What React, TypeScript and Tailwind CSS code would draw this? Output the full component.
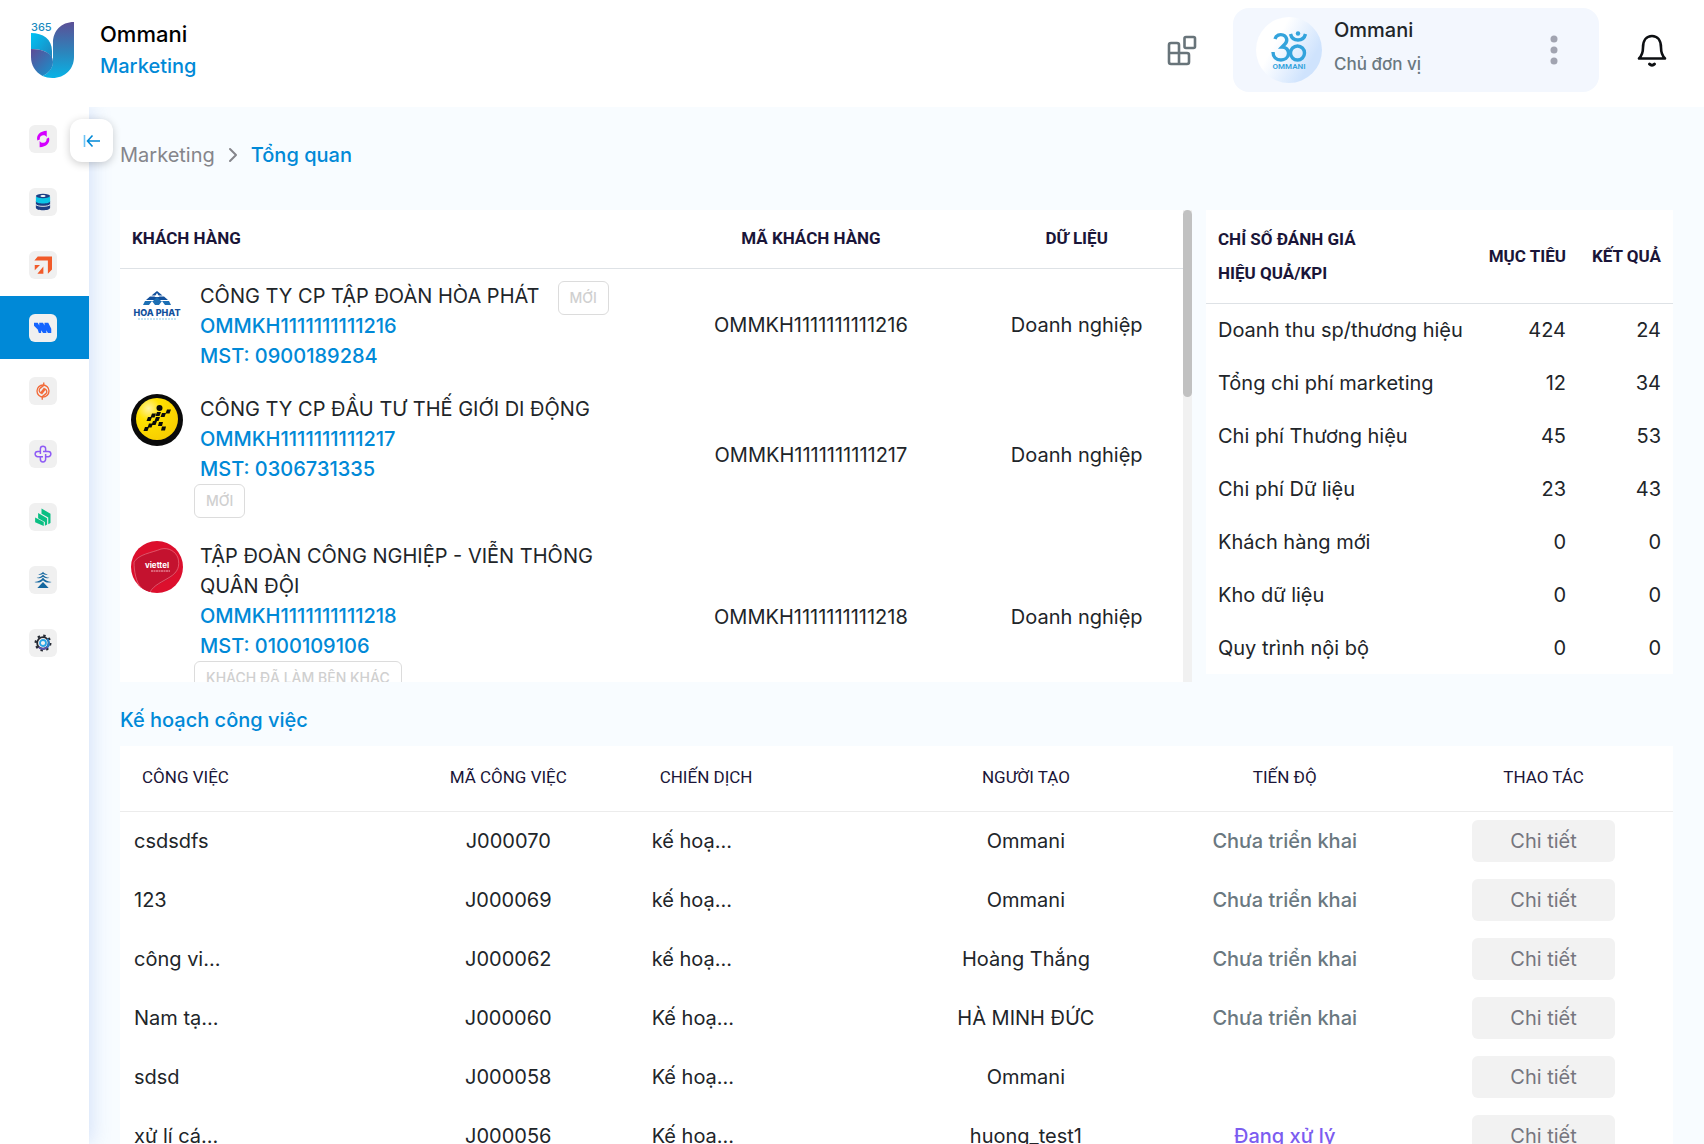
import React from 'react'
import { ChevronRight } from 'lucide-react'

interface Customer {
  code: string
  name: string
  tax: string
  type: string
  status: string
  logo: React.ReactNode
}

interface Task {
  name: string
  code: string
  campaign: string
  creator: string
  progress: string
}

function BrandLogo() {
  return (
    <svg viewBox="0 0 43 56" className="h-14 w-[43px] overflow-visible" aria-hidden="true">
      <defs>
        <linearGradient id="brandRight" x1="0" y1="0" x2="0" y2="1">
          <stop offset="0" stopColor="#5c4f96" />
          <stop offset="0.55" stopColor="#2b86bd" />
          <stop offset="1" stopColor="#08b3e6" />
        </linearGradient>
        <linearGradient id="brandLeaf" x1="0" y1="0" x2="1" y2="1">
          <stop offset="0" stopColor="#00c3f5" />
          <stop offset="1" stopColor="#2180b8" />
        </linearGradient>
        <linearGradient id="brandLow" x1="0" y1="0" x2="0.8" y2="1">
          <stop offset="0" stopColor="#5f4b95" />
          <stop offset="1" stopColor="#1a8fca" />
        </linearGradient>
      </defs>
      <path d="M43 0v35c0 12-9 21-21.500 21-4 0-7-.8-10-2C18 51 22 46 22 39V21C22 9 30 0 43 0z" fill="url(#brandRight)" />
      <path d="M0 11c12 0 21 6 21 18v10C21 31 12 27 0 27z" fill="url(#brandLeaf)" />
      <path d="M0 27c12 0 22 4 22 13 0 6-4 11-10.500 14C4 50 0 43 0 35z" fill="url(#brandLow)" />
      <text x="0" y="9" fontSize="11" fontFamily="Inter, sans-serif" fontWeight="500" fill="#1a8ac0">365</text>
    </svg>
  )
}

function OmLogo() {
  return (
    <svg viewBox="0 0 66 66" className="size-[66px]" aria-hidden="true">
      <defs>
        <linearGradient id="omBg" x1="0.1" y1="0.2" x2="1" y2="0.7">
          <stop offset="0.25" stopColor="#ffffff" />
          <stop offset="0.85" stopColor="#cfe3fd" />
        </linearGradient>
      </defs>
      <circle cx="33" cy="33" r="33" fill="url(#omBg)" />
      <g fill="none" stroke="#33a3dc" strokeWidth="3.4">
        <path d="M19 22c1-4 5-5 8-4 4 1.500 5 6 2 9l-3 3c4 0 7 3 6.500 7-.5 4-4 6-7.500 6-5 0-8-3-8-8" />
        <circle cx="41.500" cy="36" r="7" />
        <path d="M34.500 17c1 4 4 6 7.500 6s6.500-2 7.500-6" />
      </g>
      <circle cx="42" cy="16.500" r="2.200" fill="#33a3dc" />
      <text x="33" y="52" textAnchor="middle" fontSize="8" fontFamily="Roboto, sans-serif" fontWeight="600" fill="#33a3dc">OMMANI</text>
    </svg>
  )
}

function HoaPhatLogo() {
  return (
    <svg viewBox="0 0 52 52" className="size-[52px]" aria-hidden="true">
      <path d="M26 10l5.500 4.500h-11z" fill="#12509c" />
      <path d="M19 15.500h5l2-2 2 2h5l4 3.500H15z" fill="#12509c" />
      <path d="M14 20h8l4-4 4 4h8l2 4H12z" fill="#1c6fb4" />
      <path d="M26 12l2.500 4h-5zM21 20l3 4h-6zM31 20l3 4h-6z" fill="#fff" />
      <text x="26" y="35" textAnchor="middle" fontSize="9" fontFamily="Inter, sans-serif" fontWeight="800" fill="#12509c">HOA PHAT</text>
      <path d="M7 38h39" stroke="#8fcbe8" strokeWidth="1" strokeDasharray="2 1" />
    </svg>
  )
}

function MobileWorldLogo() {
  return (
    <svg viewBox="0 0 52 52" className="size-[52px]" aria-hidden="true">
      <defs>
        <radialGradient id="mwSun" cx="0.3" cy="0.25" r="0.8">
          <stop offset="0" stopColor="#fff2a0" />
          <stop offset="0.35" stopColor="#ffe100" />
          <stop offset="1" stopColor="#f7cd00" />
        </radialGradient>
      </defs>
      <circle cx="26" cy="26" r="26" fill="#0a0a0a" />
      <circle cx="26" cy="25" r="21" fill="url(#mwSun)" />
      <g fill="#0a0a0a">
        <circle cx="28.500" cy="14" r="3" />
        <path d="M36 15.500h4l-1.500 4h-4zM31 19h4l-1.500 4h-4zM26 18h4l-1.500 4h-4zM21 19.500h4l-1.500 4h-4zM17 23h4l-1.500 4h-4zM25 23h4l-1.500 4h-4zM22 27h4l-1.500 4h-4zM28 28h4l-1 4h-4zM18 29.500h4l-1.500 4h-4zM31 32.500h4l-1 4h-4zM14 33h4l-1.500 4h-4z" />
      </g>
    </svg>
  )
}

function ViettelLogo() {
  return (
    <svg viewBox="0 0 52 52" className="size-[52px]" aria-hidden="true">
      <circle cx="26" cy="26" r="26" fill="#dc0f2d" />
      <path d="M3 20C8 12 20 12 30 8c8-2 14 3 17 9 2 8 0 14-8 20-8 5-16 8-20 14C8 48 2 36 3 20z" fill="#c4122f" />
      <path d="M3 21C8 13 20 12 30 8c8-2 15 3 17 9 2 8 0 14-8 19-8 5-16 8-20 15M3 21c0 9 2 20 7 26" fill="none" stroke="#ef8191" strokeWidth="0.600" />
      <text x="26" y="27" textAnchor="middle" fontSize="8" fontFamily="Inter, sans-serif" fontWeight="700" fill="#fff">viettel</text>
      <path d="M20 30h19" stroke="#f3b3bd" strokeWidth="1" strokeDasharray="2 0.500" />
    </svg>
  )
}

const menu = [
  {
    label: 'Tổng hợp',
    icon: (
      <g fill="#d400ff">
        <path d="M17 1v8.500c-1-1.800-3-2.700-5-2.500-3 .3-4.500 2.500-4.300 5.500L4.500 14C2.500 7 8 1.500 17 1z" />
        <path d="M7.500 23v-8.500c1 1.800 3 2.700 5 2.500 3-.3 4.500-2.500 4.300-5.500L20 10c2 7-3.500 12.500-12.500 13z" />
      </g>
    ),
  },
  {
    label: 'Dữ liệu',
    icon: (
      <g>
        <path d="M2.500 15.500v4c0 4.500 19 4.500 19 0v-4c-3 3-16 3-19 0z" fill="#1d3f85" />
        <path d="M2.500 10.500v4c0 4.500 19 4.500 19 0v-4z" fill="#1d3f85" />
        <path d="M2.500 5v6c0 4 19 4 19 0V5z" fill="#0cc5e6" />
        <ellipse cx="12" cy="4" rx="9.500" ry="3" fill="#1d3f85" />
        <ellipse cx="12" cy="4" rx="3.500" ry="1.200" fill="#fff" />
        <path d="M2.500 15.500c3 3 16 3 19 0" fill="none" stroke="#efefef" strokeWidth="1.200" />
      </g>
    ),
  },
  {
    label: 'Kinh doanh',
    icon: <path d="M5 0.500H24V18l-5.500 5.500V6H0.500zM1 12h7l-7 7zM12.500 14v9.500H4.500z" fill="#f15a29" />,
  },
  {
    label: 'Marketing',
    active: true,
    icon: <path d="M0 5h5l2 3.500V5h5l2 3.500V5h5l4 8v5.500h-4.500L16.500 15v3.500H12L9.500 15v3.500H6.500L5 14 0 9z" fill="#1565ff" />,
  },
  {
    label: 'Chăm sóc',
    icon: (
      <g fill="none" stroke="#f26b3a" strokeWidth="1.800">
        <circle cx="12" cy="12" r="8" />
        <path d="M13 0.500v4L8 8.500c-2 2-1 5 1 6l5-6.500M11 23.500v-4l5-4c2-2 1-5-1-6l-5 6.500" />
      </g>
    ),
  },
  {
    label: 'Nhân sự',
    icon: (
      <g fill="none" stroke="#8e5bf5" strokeWidth="2">
        <path d="M8.500 12V5a3.500 3.500 0 0 1 7 0v4M15.500 12v7a3.500 3.500 0 0 1-7 0v-4" />
        <path d="M12 8.500h7a3.500 3.500 0 0 1 0 7h-4M12 15.500H5a3.500 3.500 0 0 1 0-7h4" />
      </g>
    ),
  },
  {
    label: 'Kế toán',
    icon: (
      <g fill="#0abf83">
        <path d="M10 0.500l12 7V20l-3 1.500V12.500L10 7.500z" />
        <path d="M5.500 6.500l12 7V22l-3 1.500v-5L5.500 13.500z" />
        <path d="M1.500 12.500l11.500 6V24L1.500 19z" />
      </g>
    ),
  },
  {
    label: 'Tổ chức',
    icon: (
      <g fill="#14679f">
        <path d="M12 14.500l7.500 8h-15z" />
        <path d="M12 1c1 1.800 3.500 3 6.500 3.500-2.500 1-5 .6-6.500-.7-1.500 1.300-4 1.700-6.500.7C8.500 4 11 2.800 12 1z" />
        <path d="M12 4.500c1.500 2.500 4.500 4 8.500 4.500-3.500 1.300-6.500.6-8.500-1.200C10 9.600 7 10.300 3.500 9c4-.5 7-2 8.500-4.500z" />
        <path d="M12 8.500c2 3.300 6 5.300 11.500 6-4.500 1.700-9 .6-11.500-2.300-2.500 2.900-7 4-11.500 2.300 5.500-.7 9.500-2.700 11.500-6z" />
      </g>
    ),
  },
  {
    label: 'Cài đặt',
    icon: (
      <g fill="none">
        <circle cx="12" cy="12" r="9.800" stroke="#262a33" strokeWidth="3" strokeDasharray="3.200 4.497" />
        <circle cx="12" cy="12" r="7.800" stroke="#262a33" strokeWidth="2.400" />
        <path d="M19.800 12a7.800 7.800 0 0 1-13.300 5.500" stroke="#5b51a8" strokeWidth="2.800" />
        <path d="M17.500 6.500a7.800 7.800 0 0 1 0 11" stroke="#2a7fc4" strokeWidth="2.800" />
        <circle cx="12" cy="12" r="4" stroke="#2aa5e6" strokeWidth="2.400" />
      </g>
    ),
  },
]

const customers: Customer[] = [
  { code: 'OMMKH1111111111216', name: 'CÔNG TY CP TẬP ĐOÀN HÒA PHÁT', tax: '0900189284', type: 'Doanh nghiệp', status: 'MỚI', logo: <HoaPhatLogo /> },
  { code: 'OMMKH1111111111217', name: 'CÔNG TY CP ĐẦU TƯ THẾ GIỚI DI ĐỘNG', tax: '0306731335', type: 'Doanh nghiệp', status: 'MỚI', logo: <MobileWorldLogo /> },
  { code: 'OMMKH1111111111218', name: 'TẬP ĐOÀN CÔNG NGHIỆP - VIỄN THÔNG QUÂN ĐỘI', tax: '0100109106', type: 'Doanh nghiệp', status: 'KHÁCH ĐÃ LÀM BÊN KHÁC', logo: <ViettelLogo /> },
]

const kpis = [
  { label: 'Doanh thu sp/thương hiệu', target: 424, result: 24 },
  { label: 'Tổng chi phí marketing', target: 12, result: 34 },
  { label: 'Chi phí Thương hiệu', target: 45, result: 53 },
  { label: 'Chi phí Dữ liệu', target: 23, result: 43 },
  { label: 'Khách hàng mới', target: 0, result: 0 },
  { label: 'Kho dữ liệu', target: 0, result: 0 },
  { label: 'Quy trình nội bộ', target: 0, result: 0 },
]

const tasks: Task[] = [
  { name: 'csdsdfs', code: 'J000070', campaign: 'kế hoạ...', creator: 'Ommani', progress: 'Chưa triển khai' },
  { name: '123', code: 'J000069', campaign: 'kế hoạ...', creator: 'Ommani', progress: 'Chưa triển khai' },
  { name: 'công vi...', code: 'J000062', campaign: 'kế hoạ...', creator: 'Hoàng Thắng', progress: 'Chưa triển khai' },
  { name: 'Nam tạ...', code: 'J000060', campaign: 'Kế hoạ...', creator: 'HÀ MINH ĐỨC', progress: 'Chưa triển khai' },
  { name: 'sdsd', code: 'J000058', campaign: 'Kế hoạ...', creator: 'Ommani', progress: '' },
  { name: 'xử lí cá...', code: 'J000056', campaign: 'Kế hoạ...', creator: 'huong_test1', progress: 'Đang xử lý' },
]

function Header() {
  return (
    <header className="flex h-[107px] shrink-0 items-start justify-between bg-white pl-[31px] pr-9">
      <a href="#" className="flex items-center gap-[26px] pt-[18px]">
        <BrandLogo />
        <span className="flex flex-col font-medium">
          <span className="text-[22px] leading-8 text-black">Ommani</span>
          <span className="text-xl leading-8 text-[#0089d7]">Marketing</span>
        </span>
      </a>
      <div className="flex items-center pt-2">
        <button aria-label="Ứng dụng" className="mr-9">
          <svg viewBox="0 0 30 32" className="h-8 w-[30px]" fill="none" stroke="#68747a" strokeWidth="2.600" strokeLinejoin="round">
            <rect x="17.500" y="3" width="10.500" height="11" rx="1.500" />
            <path d="M12 19V11a2 2 0 0 0-2-2H4a2 2 0 0 0-2 2v17a2 2 0 0 0 2 2h16a2 2 0 0 0 2-2v-7a2 2 0 0 0-2-2H2M12 19v11" />
          </svg>
        </button>
        <div className="flex h-[84px] w-[366px] items-center rounded-2xl bg-[#f3f7fe] pl-[23px] pr-[37px]">
          <OmLogo />
          <div className="ml-3 flex-1 pb-1.5 font-medium">
            <div className="text-xl leading-[34px] text-[#212529]">Ommani</div>
            <div className="text-[17px] leading-[34px] text-[#6a7880]">Chủ đơn vị</div>
          </div>
          <button aria-label="Tùy chọn">
            <svg viewBox="0 0 16 32" className="h-8 w-4" fill="#a1a4b1">
              <circle cx="8" cy="5" r="3.500" />
              <circle cx="8" cy="16" r="3.500" />
              <circle cx="8" cy="27" r="3.500" />
            </svg>
          </button>
        </div>
        <button aria-label="Thông báo" className="ml-[37px]">
          <svg viewBox="0 0 32 34" className="h-[34px] w-8" fill="none" stroke="#0d0f12" strokeWidth="2.600" strokeLinecap="round" strokeLinejoin="round">
            <path d="M3 25.500h26c-3-3-4-6-4-11 0-7-3.500-11.500-9-11.500S7 7.500 7 14.500c0 5-1 8-4 11z" />
            <path d="M13.500 31c1.500 1.700 3.500 1.700 5 0" strokeWidth="3" />
          </svg>
        </button>
      </div>
    </header>
  )
}

function Sidebar() {
  return (
    <aside className="relative z-10 w-[89px] shrink-0 bg-white shadow-[2px_0_20px_rgba(60,110,220,0.200)] [clip-path:inset(0_-40px_0_0)]">
      <nav>
        {menu.map((item) => (
          <a
            key={item.label}
            href="#"
            aria-label={item.label}
            className={item.active ? 'flex h-[63px] items-center bg-[#0089d7] pl-[29px]' : 'flex h-[63px] items-center pl-[29px]'}
          >
            <span className="flex size-7 items-center justify-center rounded-md bg-[#f0f0f0]">
              <svg viewBox="0 0 24 24" className="size-[18px]">{item.icon}</svg>
            </span>
          </a>
        ))}
      </nav>
      <button
        aria-label="Thu gọn"
        className="absolute top-3 left-[70px] flex size-[43px] items-center justify-center rounded-xl bg-white shadow-[0_2px_8px_rgba(0,0,0,0.200)]"
      >
        <svg viewBox="0 0 18 14" className="h-3.5 w-[18px]" fill="none" strokeWidth="1.600">
          <path d="M1.500 1v12" stroke="#6cc3f5" />
          <path d="M17 7H5M9.500 1.500L4.500 7l5 5.500" stroke="#0089d7" />
        </svg>
      </button>
    </aside>
  )
}

function CustomerTable() {
  return (
    <section className="flex h-[472px] min-w-0 flex-1 bg-white">
      <div className="min-w-0 flex-1 overflow-y-auto [scrollbar-width:none]">
        <table className="w-full table-fixed">
          <thead>
            <tr className="h-[58px] border-b border-[#dee2e6] font-[Roboto,sans-serif] text-[17px] text-[#1a1538]">
              <th className="w-1/2 pl-3 text-left font-bold">KHÁCH HÀNG</th>
              <th className="w-[30%] text-center font-bold">MÃ KHÁCH HÀNG</th>
              <th className="w-1/5 text-center font-bold">DỮ LIỆU</th>
            </tr>
          </thead>
          <tbody>
            {customers.map((c) => (
              <tr key={c.code}>
                <td className="pt-3 pb-[11px] pl-[11px]">
                  <div className="flex items-start gap-[11px]">
                    <span className="shrink-0">{c.logo}</span>
                    <div className="flex flex-1 flex-wrap items-start gap-x-3">
                      <div className="px-1.5 font-medium leading-[30px] text-[#0089d7]">
                        <div className="font-normal text-[#212529]">{c.name}</div>
                        <div>{c.code}</div>
                        <div>MST: {c.tax}</div>
                      </div>
                      <button className="h-[34px] rounded-md border border-[#dcdcdc] px-[11px] text-sm font-medium text-[#d0d0d0]">{c.status}</button>
                    </div>
                  </div>
                </td>
                <td className="text-center">{c.code}</td>
                <td className="text-center">{c.type}</td>
              </tr>
            ))}
          </tbody>
        </table>
      </div>
      <div className="w-[9px] shrink-0 bg-[#f1f1f1]">
        <div className="h-[187px] rounded-full bg-[#c1c1c1]" />
      </div>
    </section>
  )
}

function KpiTable() {
  return (
    <section className="w-[467px] shrink-0 bg-white">
      <table className="w-full">
        <thead>
          <tr className="h-[93px] border-b border-[#dee2e6] font-[Roboto,sans-serif] text-[17px] leading-[34px] text-[#1a1538]">
            <th className="pl-3 text-left font-bold">
              CHỈ SỐ ĐÁNH GIÁ
              <br />
              HIỆU QUẢ/KPI
            </th>
            <th className="pr-3 text-right font-bold">MỤC TIÊU</th>
            <th className="w-[95px] pr-3 text-right font-bold">KẾT QUẢ</th>
          </tr>
        </thead>
        <tbody>
          {kpis.map((k) => (
            <tr key={k.label} className="h-[53px]">
              <td className="pl-3">{k.label}</td>
              <td className="pr-3 text-right">{k.target}</td>
              <td className="pr-3 text-right">{k.result}</td>
            </tr>
          ))}
        </tbody>
      </table>
    </section>
  )
}

function TaskTable() {
  return (
    <table className="w-full table-fixed bg-white">
      <thead>
        <tr className="h-[65px] border-b border-[#ececec] font-[Roboto,sans-serif] text-[17px] text-[#1a1538]">
          <th className="pl-[22px] text-left font-normal">CÔNG VIỆC</th>
          <th className="font-normal">MÃ CÔNG VIỆC</th>
          <th className="pl-[22px] text-left font-normal">CHIẾN DỊCH</th>
          <th className="font-normal">NGƯỜI TẠO</th>
          <th className="font-normal">TIẾN ĐỘ</th>
          <th className="font-normal">THAO TÁC</th>
        </tr>
      </thead>
      <tbody>
        {tasks.map((t) => (
          <tr key={t.code} className="h-[59px] text-center">
            <td className="pl-3.5 text-left">{t.name}</td>
            <td>{t.code}</td>
            <td className="pl-3.5 text-left">{t.campaign}</td>
            <td>{t.creator}</td>
            <td className={t.progress === 'Đang xử lý' ? 'font-medium text-[#7b5cf0]' : 'font-medium text-[#6a7880]'}>{t.progress}</td>
            <td>
              <button className="h-[42px] w-[143px] rounded-md bg-[#f2f2f2] text-[#76767e]">Chi tiết</button>
            </td>
          </tr>
        ))}
      </tbody>
    </table>
  )
}

export default function App() {
  return (
    <div className="flex h-screen flex-col bg-[#f8fcff] font-[Inter,sans-serif] text-xl text-[#212529]">
      <Header />
      <div className="flex min-h-0 flex-1">
        <Sidebar />
        <main className="min-w-0 flex-1 overflow-y-auto px-[31px] pt-[33px] [scrollbar-width:none]">
          <nav className="flex items-center gap-2.5 leading-[30px]">
            <a href="#" className="text-[#85858b]">Marketing</a>
            <ChevronRight className="size-4 scale-150 text-[#85858b]" strokeWidth={2} />
            <a href="#" className="font-medium text-[#0089d7]">Tổng quan</a>
          </nav>
          <div className="mt-10 flex items-start gap-3.5">
            <CustomerTable />
            <KpiTable />
          </div>
          <h2 className="mt-[23px] mb-[11px] font-medium leading-[30px] text-[#0089d7]">Kế hoạch công việc</h2>
          <TaskTable />
        </main>
      </div>
    </div>
  )
}
